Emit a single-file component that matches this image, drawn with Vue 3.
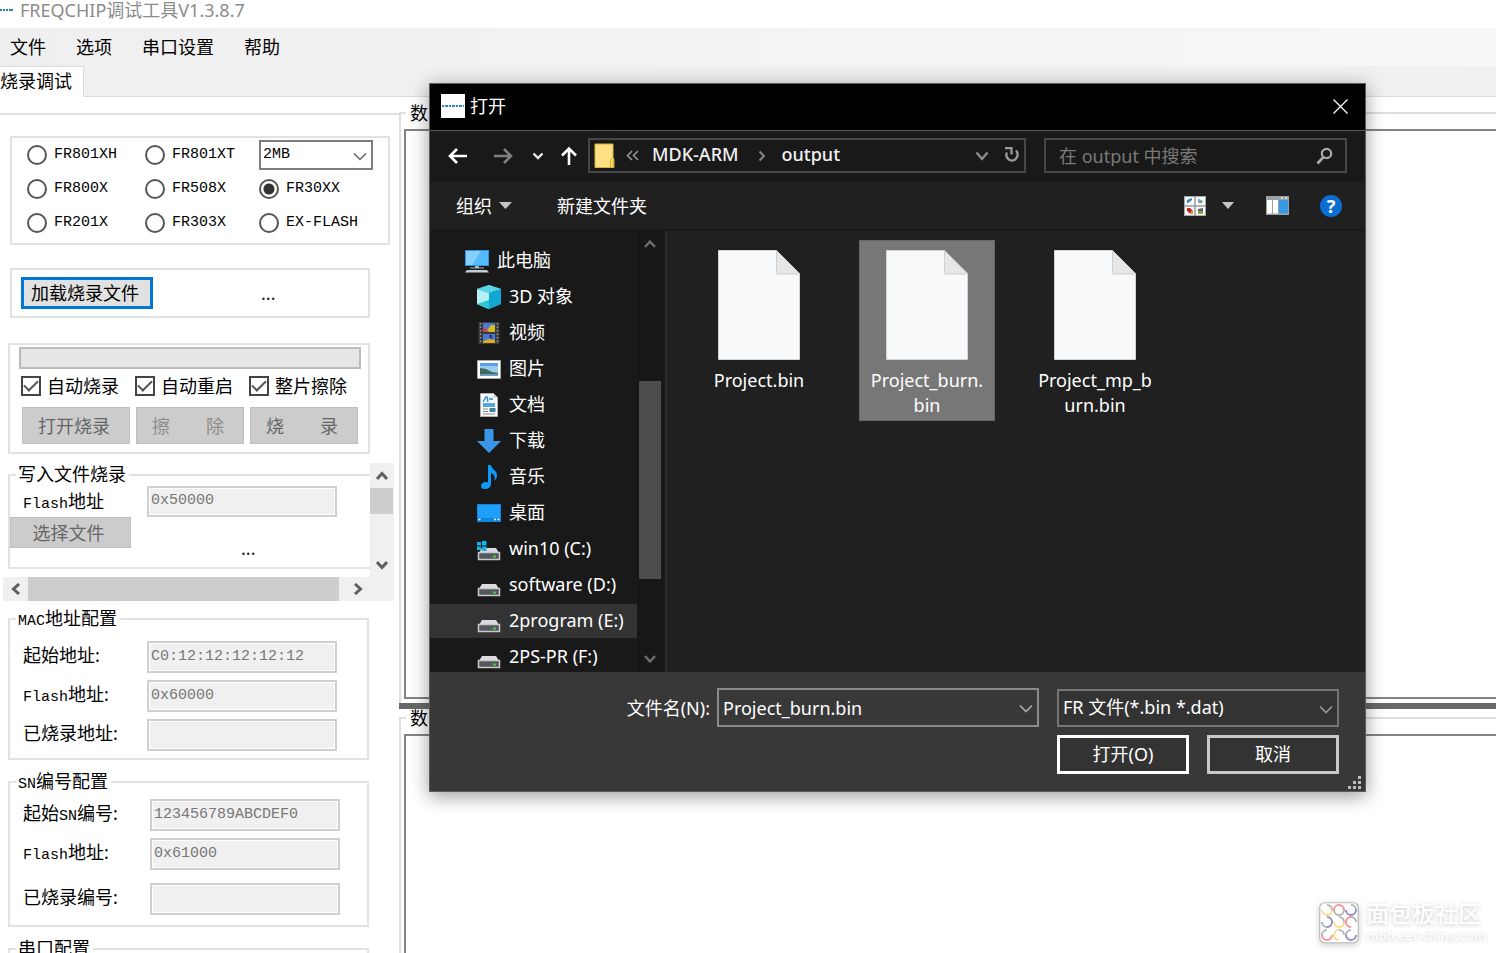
<script setup>
import { ref } from 'vue'

const menus = ['文件', '选项', '串口设置', '帮助']
const chips = [
  { id: 'FR801XH' },
  { id: 'FR801XT' },
  { id: 'size' },
  { id: 'FR800X' },
  { id: 'FR508X' },
  { id: 'FR30XX' },
  { id: 'FR201X' },
  { id: 'FR303X' },
  { id: 'EX-FLASH' },
]
const chip = ref('FR30XX')
const flashSize = ref('2MB')
const options = ref([
  { label: '自动烧录', on: true },
  { label: '自动重启', on: true },
  { label: '整片擦除', on: true },
])
const actions = [
  { label: '打开烧录', dim: false },
  { label: '擦　　除', dim: true },
  { label: '烧　　录', dim: false },
]
const macRows = [
  { id: 'mac-start', latin: '', label: '起始地址:', value: 'C0:12:12:12:12:12' },
  { id: 'mac-flash', latin: 'Flash', label: '地址:', value: '0x60000' },
  { id: 'mac-done', latin: '', label: '已烧录地址:', value: '' },
]
const snRows = [
  { id: 'sn-start', pre: '起始', latin: 'SN', label: '编号:', value: '123456789ABCDEF0' },
  { id: 'sn-flash', pre: '', latin: 'Flash', label: '地址:', value: '0x61000' },
  { id: 'sn-done', pre: '', latin: '', label: '已烧录编号:', value: '' },
]
const places = [
  { label: '此电脑', icon: 'pc', root: true },
  { label: '3D 对象', icon: 'cube' },
  { label: '视频', icon: 'video' },
  { label: '图片', icon: 'picture' },
  { label: '文档', icon: 'doc' },
  { label: '下载', icon: 'down' },
  { label: '音乐', icon: 'music' },
  { label: '桌面', icon: 'desk' },
  { label: 'win10 (C:)', icon: 'sysdrive' },
  { label: 'software (D:)', icon: 'drive' },
  { label: '2program (E:)', icon: 'drive', active: true },
  { label: '2PS-PR (F:)', icon: 'drive' },
]
const files = [
  { lines: ['Project.bin'] },
  { lines: ['Project_burn.', 'bin'], selected: true },
  { lines: ['Project_mp_b', 'urn.bin'] },
]
const fileName = ref('Project_burn.bin')
</script>

<template>
  <div class="app">
    <header class="titlebar">
      <svg class="applogo" width="14" height="6" viewBox="0 0 14 6"><path d="M0 3h2M3 3h2M6 3h2M9 3h4" stroke="#2a7fb5" stroke-width="2" /></svg>
      <span>FREQCHIP调试工具V1.3.8.7</span>
    </header>
    <nav class="menubar">
      <button v-for="m in menus" :key="m" type="button">{{ m }}</button>
    </nav>
    <div class="tabs"><button type="button" class="tab">烧录调试</button></div>

    <main class="main">
      <section class="left">
        <div class="box chips">
          <template v-for="c in chips" :key="c.id">
            <div v-if="c.id === 'size'" class="sizebox">
              <select v-model="flashSize" aria-label="容量"><option>2MB</option></select>
              <svg width="14" height="9" viewBox="0 0 14 9"><path d="M1 1.500l6 6 6-6" fill="none" stroke="#666" stroke-width="1.500" /></svg>
            </div>
            <label v-else class="radio"><input v-model="chip" type="radio" name="chip" :value="c.id" /><span>{{ c.id }}</span></label>
          </template>
        </div>

        <div class="box load">
          <button type="button" class="loadbtn">加载烧录文件</button>
          <span class="dots">...</span>
        </div>

        <div class="box burn">
          <progress value="0" max="100" aria-label="进度"></progress>
          <div class="checks">
            <label v-for="o in options" :key="o.label"><input v-model="o.on" type="checkbox" /><span>{{ o.label }}</span></label>
          </div>
          <div class="actions">
            <button v-for="a in actions" :key="a.label" type="button" disabled :class="{ dim: a.dim }">{{ a.label }}</button>
          </div>
        </div>

        <div class="scroller">
          <div class="viewport">
            <fieldset class="group write">
              <legend>写入文件烧录</legend>
              <div class="row">
                <label for="w-flash"><span class="mono">Flash</span>地址</label>
                <input id="w-flash" type="text" value="0x50000" disabled />
              </div>
              <button type="button" class="pick" disabled>选择文件</button>
              <span class="dots">...</span>
            </fieldset>
          </div>
          <div class="vbar">
            <button type="button" aria-label="向上"><svg width="12" height="10" viewBox="0 0 12 10"><path d="M1 8l5-5.500 5 5.500" fill="none" stroke="#606060" stroke-width="3" /></svg></button>
            <i class="thumb"></i>
            <button type="button" class="end" aria-label="向下"><svg width="12" height="10" viewBox="0 0 12 10"><path d="M1 2l5 5.500 5-5.500" fill="none" stroke="#606060" stroke-width="3" /></svg></button>
          </div>
          <div class="hbar">
            <button type="button" aria-label="向左"><svg width="10" height="12" viewBox="0 0 10 12"><path d="M8 1L2.500 6 8 11" fill="none" stroke="#606060" stroke-width="3" /></svg></button>
            <i class="thumb"></i>
            <button type="button" class="end" aria-label="向右"><svg width="10" height="12" viewBox="0 0 10 12"><path d="M2 1l5.500 5L2 11" fill="none" stroke="#606060" stroke-width="3" /></svg></button>
          </div>
        </div>

        <fieldset class="group mac">
          <legend><span class="mono">MAC</span>地址配置</legend>
          <div v-for="r in macRows" :key="r.id" class="row">
            <label :for="r.id"><span v-if="r.latin" class="mono">{{ r.latin }}</span>{{ r.label }}</label>
            <input :id="r.id" type="text" :value="r.value" disabled />
          </div>
        </fieldset>

        <fieldset class="group sn">
          <legend><span class="mono">SN</span>编号配置</legend>
          <div v-for="r in snRows" :key="r.id" class="row">
            <label :for="r.id">{{ r.pre }}<span v-if="r.latin" class="mono">{{ r.latin }}</span>{{ r.label }}</label>
            <input :id="r.id" type="text" :value="r.value" disabled />
          </div>
        </fieldset>

        <fieldset class="group serial">
          <legend>串口配置</legend>
        </fieldset>
      </section>

      <section class="right">
        <fieldset class="data">
          <legend>数</legend>
          <div class="pane closed"></div>
        </fieldset>
        <div class="splitter"></div>
        <fieldset class="data last">
          <legend>数</legend>
          <div class="pane"></div>
        </fieldset>
      </section>
    </main>

    <div class="dialog" role="dialog" aria-label="打开">
      <div class="dtitle">
        <span class="dlogo"><svg width="24" height="4" viewBox="0 0 24 4"><path d="M1 2h22" stroke="#2a86bb" stroke-width="2" stroke-dasharray="2 1 3 1" /></svg></span>
        <span>打开</span>
        <button type="button" class="close" aria-label="关闭"><svg width="15" height="15" viewBox="0 0 15 15"><path d="M.5.5l14 14M14.500.5l-14 14" stroke="#fff" stroke-width="1.300" /></svg></button>
      </div>

      <div class="dnav">
        <button type="button" class="nback" aria-label="后退"><svg width="20" height="18" viewBox="0 0 20 18"><path d="M19 9H2.500M9 2L2 9l7 7" fill="none" stroke="#fff" stroke-width="2.600" /></svg></button>
        <button type="button" class="nfwd" aria-label="前进"><svg width="20" height="18" viewBox="0 0 20 18"><path d="M1 9h16.500M11 2l7 7-7 7" fill="none" stroke="#808080" stroke-width="2.600" /></svg></button>
        <button type="button" class="nhist" aria-label="最近"><svg width="12" height="8" viewBox="0 0 12 8"><path d="M1.500 1.500L6 6l4.500-4.500" fill="none" stroke="#e8e8e8" stroke-width="2.400" /></svg></button>
        <button type="button" class="nup" aria-label="上移"><svg width="18" height="20" viewBox="0 0 18 20"><path d="M9 19V2.500M2 9.500L9 2.500l7 7" fill="none" stroke="#fff" stroke-width="2.600" /></svg></button>
        <div class="address">
          <svg class="folder" width="21" height="26" viewBox="0 0 21 26"><path d="M1 1h18v14l1 1v8.500H1z" fill="#ffe082" stroke="#d9b23c" /><path d="M16.500 24.500V17l2-2h1v9.500z" fill="#f9d75f" stroke="#d9b23c" /></svg>
          <svg class="dbl" width="13" height="11" viewBox="0 0 13 11"><path d="M6 1L1.500 5.500 6 10M12 1L7.500 5.500 12 10" fill="none" stroke="#999" stroke-width="1.500" /></svg>
          <a href="#" class="crumb">MDK-ARM</a>
          <svg class="sep" width="8" height="12" viewBox="0 0 8 12"><path d="M1.500 1.500L6 6l-4.500 4.500" fill="none" stroke="#858585" stroke-width="2" /></svg>
          <a href="#" class="crumb">output</a>
          <button type="button" class="adrop" aria-label="以前的位置"><svg width="14" height="10" viewBox="0 0 14 10"><path d="M1.500 1.500L7 8l5.500-6.500" fill="none" stroke="#8a8a8a" stroke-width="2.400" /></svg></button>
          <button type="button" class="refresh" aria-label="刷新"><svg width="16" height="19" viewBox="0 0 16 19"><path d="M12 4.500A5.500 6 0 1 1 2.800 6.500" fill="none" stroke="#9a9a9a" stroke-width="2.300" /><path d="M1 2.200h6.500V8.500" fill="none" stroke="#9a9a9a" stroke-width="2.300" /></svg></button>
        </div>
        <div class="search">
          <input type="text" placeholder="在 output 中搜索" aria-label="搜索" />
          <svg width="17" height="18" viewBox="0 0 17 18"><circle cx="10.500" cy="6.500" r="4.700" fill="none" stroke="#aaa" stroke-width="2.200" /><path d="M7 10.500L1.500 16.500" stroke="#aaa" stroke-width="2.600" /></svg>
        </div>
      </div>

      <div class="dtools">
        <button type="button" class="org">组织<svg width="13" height="8" viewBox="0 0 13 8"><path d="M0 0h13L6.500 7z" fill="#c8c4c2" /></svg></button>
        <button type="button" class="newf">新建文件夹</button>
        <button type="button" class="view" aria-label="视图">
          <svg width="22" height="20" viewBox="0 0 22 20"><rect x=".5" y=".5" width="21" height="19" fill="#fafafa" stroke="#aaa" /><path d="M11 0v20M0 10h22" stroke="#999" stroke-width="1.500" /><path d="M3 4l5-2v2L4 7H3z" fill="#2f86c9" /><path d="M14 2.500l5 2.500-4 2.500-1-2z" fill="#7aa2c8" /><path d="M15 6l4-1-2 2.500z" fill="#63a24c" /><path d="M3 12h3l3 3v2.500H6L3 15z" fill="#c62020" /><path d="M7 15h2v2.500H6z" fill="#e39a28" /><path d="M14 13l5-1v5.500h-5z" fill="#52617e" /><path d="M14 15h5v2.500h-5z" fill="#8da12b" /></svg>
        </button>
        <button type="button" class="vdrop" aria-label="更多视图"><svg width="12" height="8" viewBox="0 0 12 8"><path d="M0 0h12L6 7z" fill="#c8c4c2" /></svg></button>
        <button type="button" class="preview" aria-label="预览窗格">
          <svg width="23" height="19" viewBox="0 0 23 19"><path d="M0 0h23v19H0z" fill="#9ba3a8" /><path d="M1 4h5v13.500H1zM7 4h5v13.500H7z" fill="#fff" /><path d="M13 4h9v13.500h-9z" fill="#3a97e4" /><path d="M15 2h2M19 2h2" stroke="#fff" /></svg>
        </button>
        <button type="button" class="help" aria-label="帮助">?</button>
      </div>

      <div class="dbody">
        <ul class="tree">
          <li v-for="p in places" :key="p.label" :class="{ root: p.root, active: p.active }">
            <svg v-if="p.icon === 'pc'" width="24" height="24" viewBox="0 0 24 24"><path d="M0 1h24v16H0z" fill="#2f98e0" /><path d="M1 2h22v14H1z" fill="#55bbff" /><path d="M1 2h15L7 16H1z" fill="#86d0ff" /><path d="M10 17h4v2h-4zM5 18.500h14v1H5z" fill="#aab7c2" /><path d="M2 21h20l2 2.500H0z" fill="#c5ced6" /></svg>
            <svg v-else-if="p.icon === 'cube'" width="24" height="24" viewBox="0 0 24 24"><path d="M12 0l12 4v15l-12 5L0 19V4z" fill="#29bdd6" /><path d="M0 4l12 4v16L0 19z" fill="#b5f0f5" /><path d="M0 4L12 0l12 4-12 4z" fill="#58d4e4" /><path d="M12 8l12-4v15l-12 5z" fill="#13a8d4" /><path d="M0 19l12-4v9z" fill="#2ac6d5" /></svg>
            <svg v-else-if="p.icon === 'video'" width="24" height="24" viewBox="0 0 24 24"><path d="M1.500 1h21v22h-21z" fill="#3a3a3a" /><path d="M3.500 2v20M20.500 2v20" stroke="#999" stroke-width="1.500" stroke-dasharray="1.500 2" /><path d="M6 2h12v9H6zM6 13h12v9H6z" fill="#4a78d6" /><path d="M6 8h5l3-4h4v7H6z" fill="#d4bd22" /><path d="M6 7l4 1 2 3H6z" fill="#c9474f" /><path d="M6 20l6-2 6 1v3H6z" fill="#d9ad20" /><path d="M12 14h3v4l-2-1z" fill="#3b2670" /></svg>
            <svg v-else-if="p.icon === 'picture'" width="24" height="19" viewBox="0 0 24 19"><path d="M.5.5h23v18H.5z" fill="#fff" stroke="#a9a9a9" /><path d="M3 3h18v13H3z" fill="#9cccf0" /><path d="M3 3h18v3H3z" fill="#5a9de8" /><path d="M3 8l6 1 6 3 6 1v3H3z" fill="#3d6a5a" /><path d="M3 14h18v2H3z" fill="#6e9fc0" /></svg>
            <svg v-else-if="p.icon === 'doc'" width="24" height="24" viewBox="0 0 24 24"><path d="M3.500.5h13l4 4v19h-17z" fill="#fbfbfb" stroke="#b0b0b0" /><path d="M16.500.5v4h4z" fill="#ccc" /><path d="M6 9l3-5h1l1 5M12 6h4M6 11h12M6 13h12" fill="none" stroke="#1e8ad6" stroke-width="1.300" /><path d="M6 16h5M6 18.500h5M6 21h12" stroke="#888" /><path d="M12.500 15h6v4h-6z" fill="#3a86a0" /></svg>
            <svg v-else-if="p.icon === 'down'" width="24" height="24" viewBox="0 0 24 24"><path d="M7.500 0h9v12H24L12 24 0 12h7.500z" fill="#3b96e6" /></svg>
            <svg v-else-if="p.icon === 'music'" width="24" height="24" viewBox="0 0 24 24"><path d="M11 0h3c0 4 6 5 6 10 0 3-1 4-2.500 6 1-5-1-7-3.500-8v11c0 6-10 7-10 2 0-3 4-5 7-3.500z" fill="#0f9bf5" /></svg>
            <svg v-else-if="p.icon === 'desk'" width="24" height="18" viewBox="0 0 24 18"><path d="M0 0h24v18H0z" fill="#0f86dd" /><path d="M1 1h22v13H1z" fill="#1ea0fa" /><path d="M1.500 15.500h2M17 15.500h2M20.500 15.500h2" stroke="#fff" stroke-width="1.500" /></svg>
            <svg v-else width="24" height="24" viewBox="0 0 24 24"><path d="M5 11h14l3 5H2z" fill="#dcdce0" /><path d="M1.500 15.500h21v7h-21z" fill="#55585a" stroke="#c9c9cd" stroke-width="1.500" /><path d="M16 19.500h3" stroke="#3fd13f" stroke-width="2" /><path v-if="p.icon === 'sysdrive'" d="M0 5h4v3.500H0zM5 4h4.500v4.500H5zM0 9.500h4V13H0zM5 9.500h4.500V14H5z" fill="#10b4ea" /></svg>
            <span>{{ p.label }}</span>
          </li>
        </ul>
        <div class="treebar">
          <button type="button" aria-label="向上滚动"><svg width="12" height="10" viewBox="0 0 12 10"><path d="M1 8l5-5.500 5 5.500" fill="none" stroke="#6e6e6e" stroke-width="2.500" /></svg></button>
          <i class="thumb"></i>
          <button type="button" aria-label="向下滚动"><svg width="12" height="10" viewBox="0 0 12 10"><path d="M1 2l5 5.500 5-5.500" fill="none" stroke="#6e6e6e" stroke-width="2.500" /></svg></button>
        </div>
        <div class="files">
          <div v-for="f in files" :key="f.lines[0]" class="file" :class="{ selected: f.selected }">
            <svg width="82" height="110" viewBox="0 0 82 110">
              <path d="M.5.5h58l23 23v86H.5z" fill="#f8f9fa" stroke="#d4d4d4" />
              <path d="M58.500.5l23 23.500h-23z" fill="#e6e6e6" stroke="#cfcfcf" />
            </svg>
            <span v-for="l in f.lines" :key="l">{{ l }}</span>
          </div>
        </div>
      </div>

      <div class="dfoot">
        <label for="fname">文件名(N):</label>
        <div class="combo">
          <input id="fname" v-model="fileName" type="text" />
          <svg width="14" height="9" viewBox="0 0 14 9"><path d="M1 1.500l6 6 6-6" fill="none" stroke="#aaa" stroke-width="1.700" /></svg>
        </div>
        <div class="combo type">
          <select aria-label="文件类型"><option>FR 文件(*.bin *.dat)</option></select>
          <svg width="14" height="9" viewBox="0 0 14 9"><path d="M1 1.500l6 6 6-6" fill="none" stroke="#999" stroke-width="1.700" /></svg>
        </div>
        <div class="dbtns">
          <button type="button" class="ok">打开(O)</button>
          <button type="button">取消</button>
        </div>
      </div>
      <svg class="grip" width="14" height="14" viewBox="0 0 14 14"><path d="M10 0h3v3h-3zM5 5h3v3H5zM10 5h3v3h-3zM0 10h3v3H0zM5 10h3v3H5zM10 10h3v3h-3z" fill="#bdbdbd" /></svg>
    </div>

    <div class="watermark">
      <svg width="40" height="42" viewBox="0 0 40 42">
        <rect x=".75" y=".75" width="38.500" height="40" rx="5" fill="#fff" stroke="#bbb" stroke-width="1.200" />
        <g fill="none" stroke-width="2">
          <path d="M8 3a5 5 0 0 1 5 5M25 8a5 5 0 0 1-5 5M32 3a5 5 0 0 1 5 5M3 20a5 5 0 0 0 5 5M20 15a5 5 0 0 1 5 5M32 15a5 5 0 0 1 5 5M3 33a5 5 0 0 1 5-5M20 28a5 5 0 0 1 5 5M27 33a5 5 0 0 1 5-5M15 8a5 5 0 0 0 5 5" stroke="#b5b5b9" />
          <path d="M3 8a5 5 0 0 0 10 0M15 20a5 5 0 0 0 10 0M20 38a5 5 0 0 1 0-10" stroke="#fbdc8c" />
          <path d="M15 8a5 5 0 0 1 10 0M32 25a5 5 0 0 1 0-10M3 33a5 5 0 0 0 10 0" stroke="#f4959b" />
          <path d="M27 8a5 5 0 0 0 10 0M8 15a5 5 0 0 1 0 10M27 33a5 5 0 0 0 10 0" stroke="#9191bd" />
        </g>
      </svg>
      <div><strong>面包板社区</strong><small>mbb.eet-china.com</small></div>
    </div>
  </div>
</template>

<style>
body {
  margin: 0;
  background: #fff;
}
</style>

<style scoped>
* {
  box-sizing: border-box;
}
.app {
  position: relative;
  display: flex;
  flex-direction: column;
  height: 100vh;
  overflow: hidden;
  font-family: "Noto Sans", "Noto Sans CJK SC", sans-serif;
  font-size: 18px;
  line-height: 20px;
  color: #000;
  background: #fff;
}
button,
input,
select {
  font: inherit;
  color: inherit;
  margin: 0;
  padding: 0;
  border: 0;
  border-radius: 0;
  background: none;
}
button {
  display: flex;
  align-items: center;
  justify-content: center;
  white-space: nowrap;
}
svg {
  display: block;
  flex: none;
}
.mono {
  font-family: "Liberation Mono", monospace;
  font-size: 15px;
  line-height: 1;
}
.titlebar {
  display: flex;
  align-items: center;
  gap: 6px;
  height: 28px;
  padding-bottom: 8px;
  color: #8c8c8c;
}
.menubar {
  display: flex;
  gap: 30px;
  height: 38px;
  padding-left: 10px;
  background: linear-gradient(90deg, #efefef, #f7f7f7);
}
.tabs {
  height: 31px;
  background: #f0f0f0;
  border-bottom: 1px solid #dcdcdc;
}
.tab {
  height: 31px;
  width: 84px;
  padding-bottom: 2px;
  justify-content: flex-start;
  background: #fff;
  border: 1px solid #dcdcdc;
  border-width: 1px 1px 0 0;
}
.main {
  flex: 1;
  min-height: 0;
  display: flex;
}
.left {
  flex: none;
  width: 399px;
  margin-top: 16px;
  border-top: 2px solid #e2e2e2;
  padding-top: 21px;
}
.box {
  border: 2px solid #e2e2e2;
}
.chips {
  margin: 0 9px 23px 10px;
  padding: 0 0 3px 15px;
  display: grid;
  grid-template-columns: 118px 114px 1fr;
  grid-auto-rows: 34px;
  align-items: center;
}
.radio,
.checks label {
  display: flex;
  align-items: center;
}
.radio {
  gap: 7px;
  font-family: "Liberation Mono", monospace;
  font-size: 15px;
}
.radio input {
  appearance: none;
  width: 20px;
  height: 20px;
  border: 2px solid #555;
  border-radius: 50%;
  background: #fff;
}
.radio input:checked {
  background: radial-gradient(circle, #333 5px, #fff 6px);
}
.sizebox {
  position: relative;
  width: 114px;
}
.sizebox select {
  appearance: none;
  display: block;
  width: 100%;
  height: 30px;
  padding: 0 0 0 2px;
  border: 2px solid #7e7e7e;
  background: #fff;
  font-family: "Liberation Mono", monospace;
  font-size: 15px;
}
.sizebox svg {
  position: absolute;
  right: 6px;
  top: 12px;
}
.load {
  margin: 0 29px 25px 10px;
  padding: 7px 9px;
  display: flex;
  align-items: center;
}
.loadbtn {
  width: 132px;
  height: 32px;
  padding-right: 4px;
  background: #e1e1e1;
  border: 3px solid #0078d7;
}
.dots {
  color: #222;
}
.load .dots {
  margin-left: 108px;
}
.burn {
  margin: 0 29px 9px 8px;
  padding: 2px 7px 8px 9px;
}
progress {
  appearance: none;
  display: block;
  width: 100%;
  height: 22px;
  border: 2px solid #bcbcbc;
  background: #e6e6e6;
}
progress::-webkit-progress-bar {
  background: #e6e6e6;
}
.checks {
  display: grid;
  grid-template-columns: 114px 114px 1fr;
  height: 34px;
  margin: 0 0 4px 2px;
}
.checks label {
  gap: 6px;
  white-space: nowrap;
}
.checks input {
  appearance: none;
  width: 20px;
  height: 20px;
  border: 2px solid #444;
  display: grid;
  place-items: center;
}
.checks input:checked::before {
  content: "";
  width: 12px;
  height: 6px;
  border: solid #555;
  border-width: 0 0 2px 2px;
  rotate: -45deg;
  margin-bottom: 4px;
}
.actions {
  display: flex;
  gap: 6px;
  padding-left: 3px;
}
.actions button,
.pick {
  width: 108px;
  height: 37px;
  padding-right: 4px;
  background: #ccc;
  border: 1px solid #bfbfbf;
  color: #666;
}
.actions button.dim {
  color: #8c8c8c;
}
.scroller {
  display: grid;
  grid-template-columns: 1fr 24px;
  grid-template-rows: 114px 24px;
  margin: 0 5px 8px 3px;
  background: #f0f0f0;
}
.viewport {
  background: #fff;
  overflow: hidden;
  padding: 2px 0 0 5px;
}
.group {
  margin: 0;
  min-width: 0;
  padding: 0;
  border: 2px solid #e2e2e2;
}
.group legend {
  height: 20px;
  margin-left: 6px;
  padding: 0 3px 0 2px;
  line-height: 18px;
}
.row {
  display: flex;
  align-items: center;
  height: 32px;
}
.row label {
  width: 124px;
  padding-bottom: 4px;
}
.row input {
  width: 190px;
  height: 32px;
  padding: 0 0 2px 2px;
  border: 2px solid #cfcfcf;
  box-shadow: inset 0 0 0 1px #fff;
  background: #f0f0f0;
  color: #777;
  font-family: "Liberation Mono", monospace;
  font-size: 15px;
}
.write {
  position: relative;
  height: 104px;
  border-right: 0;
}
.write .row {
  padding-left: 13px;
  margin-top: 1px;
  height: 31px;
}
.write .row label {
  padding-bottom: 0;
}
.write .row input {
  height: 31px;
}
.pick {
  width: 121px;
  height: 31px;
}
.write .dots {
  position: absolute;
  left: 231px;
  bottom: 9px;
}
.vbar,
.hbar {
  display: flex;
  background: #f0f0f0;
}
.vbar {
  flex-direction: column;
}
.vbar button,
.hbar button {
  width: 24px;
  height: 25px;
}
.hbar button {
  width: 25px;
  height: 24px;
}
.vbar .end {
  margin-top: auto;
}
.hbar .end {
  margin-left: auto;
}
.vbar .thumb {
  height: 26px;
  width: 23px;
  background: #cdcdcd;
}
.hbar .thumb {
  width: 311px;
  background: #cdcdcd;
}
.mac,
.sn,
.serial {
  margin: 0 30px 12px 8px;
}
.mac,
.sn {
  display: flex;
  flex-direction: column;
  gap: 7px;
  padding-left: 13px;
}
.mac legend,
.sn legend {
  margin-left: -7px;
}
.mac {
  padding-top: 12px;
  padding-bottom: 7px;
}
.sn {
  padding-top: 7px;
  padding-bottom: 10px;
}
.sn .row label {
  width: 127px;
}
.sn .row:last-child {
  margin-top: 6px;
}
.serial {
  height: 60px;
}
.right {
  flex: 1;
  min-width: 0;
  display: grid;
  grid-template-rows: 71fr 6px 29fr;
  padding-top: 7px;
}
.data {
  display: flex;
  flex-direction: column;
  min-width: 0;
  min-height: 0;
  margin: 0;
  padding: 7px 0 4px 3px;
  border: 2px solid #dedede;
  border-width: 2px 0 0 2px;
}
.data.last {
  padding-bottom: 0;
}
.data legend {
  margin-left: 2px;
  padding: 0 4px;
  line-height: 18px;
}
.pane {
  flex: 1;
  border: 2px solid #848484;
  border-width: 2px 0 0 2px;
}
.pane.closed {
  border-bottom-width: 2px;
}
.splitter {
  background: #696969;
}

.dialog {
  position: absolute;
  left: 429px;
  top: 83px;
  width: 937px;
  border: 1px solid #5c5c5c;
  background: #191919;
  color: #fff;
  box-shadow: 0 4px 18px rgba(0, 0, 0, 0.4);
}
.dtitle {
  display: flex;
  align-items: center;
  height: 47px;
  padding: 0 17px 2px 11px;
  gap: 5px;
  background: #000;
  border-bottom: 1px solid #5a5a5a;
}
.dlogo {
  display: grid;
  place-items: center;
  width: 24px;
  height: 24px;
  background: #fff;
}
.close {
  margin-left: auto;
}
.dnav {
  display: flex;
  align-items: center;
  height: 51px;
  padding: 0 18px 2px;
}
.nfwd {
  margin-left: 25px;
}
.nhist {
  margin-left: 19px;
}
.nup {
  margin-left: 16px;
}
.address,
.search {
  display: flex;
  align-items: center;
  height: 35px;
  border: 2px solid #474747;
}
.address {
  flex: 1;
  margin: 0 18px 0 10px;
  padding: 0 4px;
}
.address .dbl {
  margin: 0 13px 0 11px;
}
.crumb {
  padding-bottom: 4px;
  color: #f0f0f0;
  text-decoration: none;
  font-weight: 500;
}
.address .sep {
  margin: 0 16px 0 19px;
}
.adrop {
  margin-left: auto;
}
.refresh {
  margin-left: 15px;
}
.search {
  width: 303px;
  padding: 0 12px 0 13px;
}
.search input {
  flex: 1;
  min-width: 0;
  outline: 0;
}
.search input::placeholder {
  color: #7a7a7a;
}
.dtools {
  display: flex;
  align-items: center;
  height: 49px;
  padding: 0 23px 0 26px;
  background: #202020;
  border-bottom: 2px solid #191919;
}
.org {
  gap: 7px;
}
.newf {
  margin-left: 45px;
}
.view {
  margin-left: auto;
}
.vdrop {
  margin-left: 16px;
}
.preview {
  margin-left: 32px;
}
.help {
  width: 22px;
  height: 22px;
  margin-left: 31px;
  border-radius: 50%;
  background: #0a6fd0;
  font-weight: 700;
}
.dbody {
  display: flex;
  height: 441px;
  overflow: hidden;
}
.tree {
  flex: none;
  display: flex;
  flex-direction: column;
  gap: 2px;
  width: 207px;
  margin: 0;
  padding: 13px 0 0;
  list-style: none;
}
.tree li {
  flex: none;
  display: flex;
  align-items: center;
  gap: 8px;
  height: 34px;
  padding-left: 47px;
  white-space: nowrap;
}
.tree li.root {
  padding-left: 35px;
}
.tree li.active {
  background: #333;
}
.tree span {
  padding-bottom: 2px;
}
.treebar {
  flex: none;
  display: flex;
  flex-direction: column;
  width: 28px;
  padding: 0 4px 1px 2px;
  background: #171717;
}
.treebar button {
  width: 22px;
  height: 25px;
}
.treebar .thumb {
  height: 198px;
  margin: auto 0 67px;
  background: #4d4d4d;
}
.files {
  flex: 1;
  display: flex;
  align-items: flex-start;
  gap: 32px;
  padding: 9px 0 0 24px;
  background: #202020;
  border-left: 2px solid #2b2b2b;
}
.file {
  display: flex;
  flex-direction: column;
  align-items: center;
  width: 136px;
  padding: 9px 0 2px;
  border: 1px solid transparent;
  line-height: 25px;
}
.file.selected {
  background: #777;
  border-color: #666;
}
.file svg {
  margin-bottom: 8px;
}
.dfoot {
  display: grid;
  grid-template-columns: 1fr 322px 282px;
  column-gap: 18px;
  row-gap: 8px;
  align-items: center;
  padding: 16px 26px 17px 0;
  background: #383838;
}
.dfoot > label {
  justify-self: end;
  margin-right: -11px;
}
.combo {
  position: relative;
}
.combo input,
.combo select {
  appearance: none;
  display: block;
  width: 100%;
  height: 39px;
  padding: 0 24px 0 4px;
  border: 2px solid #8a8a8a;
  background: #383838;
  outline: 0;
}
.combo.type select {
  height: 38px;
  padding-bottom: 2px;
  background: #333;
  border-color: #757575;
}
.combo svg {
  position: absolute;
  right: 6px;
  top: 16px;
}
.dbtns {
  grid-column: 3;
  display: grid;
  grid-template-columns: 1fr 1fr;
  gap: 18px;
}
.dbtns button {
  height: 39px;
  padding-bottom: 2px;
  background: #333;
  border: 3px solid #c8c8c8;
}
.dbtns .ok {
  border-color: #fff;
}
.grip {
  position: absolute;
  right: 3px;
  bottom: 1px;
}
.watermark {
  position: absolute;
  right: 10px;
  bottom: 9px;
  display: flex;
  align-items: center;
  gap: 7px;
  color: #fff;
  text-shadow: 0 1px 4px rgba(0, 0, 0, 0.22);
}
.watermark svg {
  filter: drop-shadow(0 2px 3px rgba(0, 0, 0, 0.2));
}
.watermark strong,
.watermark small {
  display: block;
  font-weight: 500;
}
.watermark strong {
  font-size: 23px;
  line-height: 25px;
}
.watermark small {
  font-size: 13px;
  line-height: 18px;
}
</style>
